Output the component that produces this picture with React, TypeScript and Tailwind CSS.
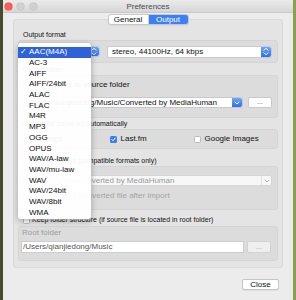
import React from "react";

const FORMATS = [
  "AAC(M4A)",
  "AC-3",
  "AIFF",
  "AIFF/24bit",
  "ALAC",
  "FLAC",
  "M4R",
  "MP3",
  "OGG",
  "OPUS",
  "WAV/A-law",
  "WAV/mu-law",
  "WAV",
  "WAV/24bit",
  "WAV/8bit",
  "WMA",
];

function Stepper() {
  return (
    <div className="flex h-full w-[10px] shrink-0 items-center justify-center rounded-r-[2px] bg-gradient-to-b from-[#6aa6fb] to-[#2f6df2]">
      <svg width="6" height="9" viewBox="0 0 6 9" fill="none" stroke="white" strokeWidth="1" strokeLinecap="round" strokeLinejoin="round">
        <path d="M1 3.2 L3 1.2 L5 3.2" />
        <path d="M1 5.8 L3 7.8 L5 5.8" />
      </svg>
    </div>
  );
}

function Chevron({ blue }: { blue: boolean }) {
  return (
    <div
      className={
        blue
          ? "flex h-full w-[10px] shrink-0 items-center justify-center rounded-r-[2px] bg-gradient-to-b from-[#6aa6fb] to-[#2f6df2]"
          : "flex h-full w-[10px] shrink-0 items-center justify-center border-l border-[#e2e2e2]"
      }
    >
      <svg width="6" height="4" viewBox="0 0 6 4" fill="none" stroke={blue ? "white" : "#b5b5b5"} strokeWidth="1" strokeLinecap="round" strokeLinejoin="round">
        <path d="M1 1 L3 3 L5 1" />
      </svg>
    </div>
  );
}

function Checkbox({ checked }: { checked?: boolean }) {
  if (checked) {
    return (
      <span className="flex h-[7px] w-[7px] shrink-0 items-center justify-center rounded-[1.5px] bg-[#3b7df4]">
        <svg width="5" height="5" viewBox="0 0 5 5" fill="none" stroke="white" strokeWidth="1" strokeLinecap="round" strokeLinejoin="round">
          <path d="M0.8 2.6 L2 3.8 L4.2 1" />
        </svg>
      </span>
    );
  }
  return <span className="h-[7px] w-[7px] shrink-0 rounded-[1.5px] border border-[#b9b9b9] bg-white" />;
}

export default function App() {
  return (
    <div className="flex h-[300px] w-[296px] overflow-hidden bg-[#8a9b56] font-['Liberation_Sans',Arial,sans-serif] text-[#111]">
      <div className="w-[3px] bg-[#4a4a30]" />
      <div className="relative flex w-[290px] flex-col bg-[#ececec]">
        {/* title bar */}
        <div className="grid h-[13px] grid-cols-[1fr_auto_1fr] items-center border-b border-[#c9c9c9] bg-gradient-to-b from-[#ebebeb] to-[#d6d6d6]">
          <div className="flex items-center gap-[5.5px] pl-[1.5px]">
            <span className="h-[7px] w-[7px] rounded-full bg-[#fc5f57] ring-[0.5px] ring-[#e0443e]" />
            <span className="h-[7px] w-[7px] rounded-full bg-[#d0d0d0] ring-[0.5px] ring-[#c0c0c0]" />
            <span className="h-[7px] w-[7px] rounded-full bg-[#d0d0d0] ring-[0.5px] ring-[#c0c0c0]" />
          </div>
          <div className="text-[8px] leading-[13px] text-[#4d4d4d]">Preferences</div>
          <div />
        </div>

        {/* tabs */}
        <div className="relative z-10 mt-px flex justify-center">
          <div className="flex h-[11px] overflow-hidden rounded-[3px] border border-[#c8c8c8] bg-white text-[8px] leading-[9px] shadow-[0_0.5px_0.5px_rgba(0,0,0,0.1)]">
            <div className="flex w-[40px] items-center justify-center border-r border-[#d0d0d0] text-[#111]">General</div>
            <div className="flex w-[39px] items-center justify-center bg-[#3d80f6] text-white">Output</div>
          </div>
        </div>

        {/* group */}
        <div className="mx-[10px] mt-[-6px] flex flex-col rounded-[3px] border border-[#dadada] bg-[#e4e4e4] pt-[10px] pb-[6px]">
          <div className="h-[10px] pl-[9px] text-[7px] leading-[10px]">Output format</div>

          {/* format box */}
          <div className="mx-[4px] flex h-[23px] items-center gap-[7px] rounded-[3px] border border-[#d4d4d4] bg-[#dcdcdc] px-[5px]">
            <div className="flex h-[11px] w-[76px] items-center rounded-[2px] border border-[#c8c8c8] bg-white">
              <div className="flex-1" />
              <Stepper />
            </div>
            <div className="flex h-[12px] flex-1 items-center rounded-[2px] border border-[#cbcbcb] bg-white">
              <div className="flex-1 pl-[4px] text-[8px] leading-[10px]">stereo, 44100Hz, 64 kbps</div>
              <Stepper />
            </div>
          </div>

          <div className="mt-[2px] h-[10px] pl-[9px] text-[7px] leading-[10px]">Output folder</div>

          {/* folder box */}
          <div className="mx-[4px] flex h-[43px] flex-col rounded-[3px] border border-[#d4d4d4] bg-[#dcdcdc] px-[5px] pt-[4px]">
            <div className="flex h-[10px] items-center gap-[3px] pl-[20px] text-[8px] leading-[10px]">
              <span className="h-[7px] w-[7px] rounded-full border border-[#b9b9b9] bg-white" />
              <span>Save to source folder</span>
            </div>
            <div className="mt-[7px] flex h-[11px] items-center gap-[5px]">
              <div className="flex h-full flex-1 items-center rounded-[2px] border border-[#c8c8c8] bg-white">
                <div className="flex-1 overflow-hidden whitespace-nowrap pl-[3px] text-[8px] leading-[10px]">/Users/qianjiedong/Music/Converted by MediaHuman</div>
                <Chevron blue />
              </div>
              <div className="flex h-full w-[24px] items-center justify-center rounded-[2px] border border-[#c8c8c8] bg-white pb-[2px] text-[7px] leading-[7px] text-[#555]">...</div>
            </div>
          </div>

          <div className="mt-px h-[10px] pl-[9px] text-[7px] leading-[10px]">Search for cover art automatically</div>

          {/* cover art box */}
          <div className="mx-[4px] flex h-[20px] items-center rounded-[3px] border border-[#d4d4d4] bg-[#dcdcdc] pl-[5px] text-[8px] leading-[10px]">
            <div className="flex w-[86px] items-center gap-[3px]">
              <Checkbox checked />
              <span>Discogs</span>
            </div>
            <div className="flex w-[84px] items-center gap-[3.5px]">
              <Checkbox checked />
              <span>Last.fm</span>
            </div>
            <div className="flex items-center gap-[3.5px]">
              <Checkbox />
              <span>Google Images</span>
            </div>
          </div>

          <div className="mt-[7px] flex h-[10px] items-center gap-[3px] pl-[9px] text-[7px] leading-[10px]">
            <Checkbox />
            <span>Add to iTunes (compatible formats only)</span>
          </div>

          {/* itunes box */}
          <div className="mx-[4px] flex h-[44px] flex-col rounded-[3px] border border-[#d4d4d4] bg-[#dcdcdc] px-[5px] pt-[8px]">
            <div className="flex h-[11px] items-center rounded-[2px] border border-[#d6d6d6] bg-[#f7f7f7]">
              <div className="flex-1 overflow-hidden whitespace-nowrap pl-[3px] text-[8px] leading-[10px] text-[#9a9a9a]">Music/iTunes/Converted by MediaHuman</div>
              <Chevron blue={false} />
            </div>
            <div className="mt-[5px] flex h-[10px] items-center gap-[3px] pl-[20px] text-[8px] leading-[10px] text-[#a5a5a5]">
              <span className="h-[7px] w-[7px] rounded-[1.5px] border border-[#cfcfcf] bg-[#f2f2f2]" />
              <span>Delete converted file after import</span>
            </div>
          </div>

          <div className="mt-[5px] flex h-[10px] items-center gap-[2px] pl-[9px] text-[7px] leading-[10px]">
            <Checkbox />
            <span>Keep folder structure (if source file is located in root folder)</span>
          </div>

          {/* root folder box */}
          <div className="mx-[4px] mt-px flex h-[35px] flex-col rounded-[3px] border border-[#d4d4d4] bg-[#dcdcdc] px-[2px] pt-[1px]">
            <div className="h-[10px] pl-px text-[8px] leading-[10px] text-[#9c9c9c]">Root folder</div>
            <div className="mt-[3px] flex h-[12px] items-center gap-[3px]">
              <div className="flex h-full w-[223px] items-center border border-[#cdcdcd] bg-white pl-px text-[8px] leading-[10px] text-[#555]">/Users/qianjiedong/Music</div>
              <div className="flex h-full w-[24px] items-center justify-center rounded-[2px] border border-[#d2d2d2] bg-[#efefef] pb-[2px] text-[7px] leading-[7px] text-[#a0a0a0]">...</div>
            </div>
          </div>
        </div>

        {/* footer */}
        <div className="mt-[11px] flex justify-end pr-[14px]">
          <div className="flex h-[11px] w-[37px] items-center justify-center rounded-[2px] border border-[#c6c6c6] bg-white text-[8px] leading-[10px] shadow-[0_0.5px_0.5px_rgba(0,0,0,0.12)]">Close</div>
        </div>

        {/* open popup menu */}
        <div className="absolute left-[15px] top-[43px] w-[73px] rounded-[3px] bg-white/95 pt-[4px] pb-px shadow-[0_2px_6px_rgba(0,0,0,0.3)] ring-[0.5px] ring-[#c4c4c4]">
          {FORMATS.map((f, i) => (
            <div
              key={f}
              className={
                i === 0
                  ? "flex h-[10.7px] items-center bg-[#2f62d8] text-[8px] leading-[10px] text-white"
                  : "flex h-[10.7px] items-center text-[8px] leading-[10px] text-[#0d0d0d]"
              }
            >
              <span className="w-[11px] pl-[2px] text-[8px]">{i === 0 ? "✓" : ""}</span>
              <span>{f}</span>
            </div>
          ))}
        </div>
      </div>
      <div className="flex-1 bg-[#8c9e55]" />
    </div>
  );
}
